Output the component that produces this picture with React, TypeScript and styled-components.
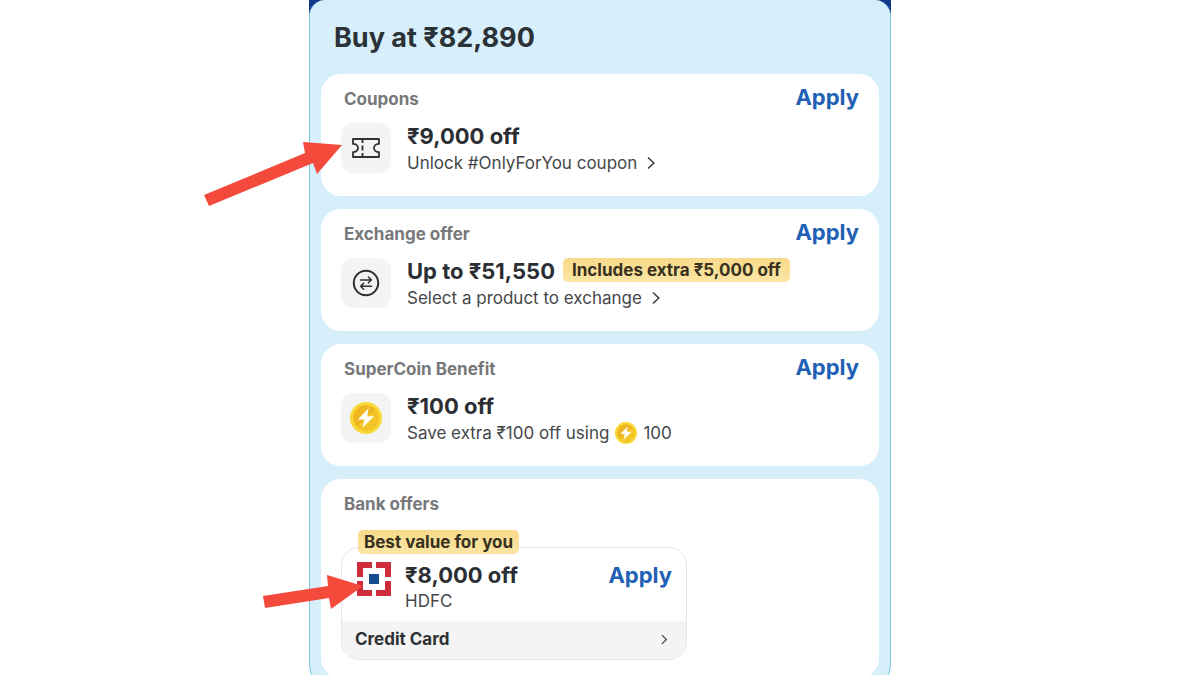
import React from "react";
import styled, { createGlobalStyle } from "styled-components";

const GlobalStyle = createGlobalStyle`
  *, *::before, *::after { box-sizing: border-box; }
  body {
    margin: 0;
    background: #fff;
    color: #2b2e33;
    font-family: Inter, "Noto Sans", "Liberation Sans", sans-serif;
  }
  h1, h2, h3, p { margin: 0; }
`;

const Page = styled.main`
  height: 100vh;
  overflow: hidden;
`;

const Backdrop = styled.div`
  width: 100%;
  max-width: 582px;
  margin: 0 auto;
  background: linear-gradient(#12398a 14px, transparent 14px);
`;

const Sheet = styled.div`
  display: flex;
  flex-direction: column;
  gap: 13px;
  padding: 20px 11px 6px;
  border: 1px solid #7fc6dc;
  border-top: 0;
  border-radius: 16px 16px 20px 20px;
  background: #d7eefb;
`;

const Price = styled.h1`
  padding: 0 13px 5px;
  font-size: 27px;
  line-height: 36px;
  font-weight: 650;
  color: #2a3238;
`;

const Card = styled.section`
  padding: 10px 20px 20px;
  border-radius: 20px;
  background: #fff;
`;

const BankCard = styled(Card)`
  padding-bottom: 18px;
`;

const CardHeader = styled.header`
  display: flex;
  align-items: flex-start;
  justify-content: space-between;
  padding-left: 3px;
`;

const Label = styled.h2`
  padding-top: 2px;
  font-size: 17px;
  line-height: 26px;
  font-weight: 700;
  color: #77787a;
`;

const ApplyButton = styled.button`
  padding: 0;
  border: 0;
  background: none;
  color: #2161b5;
  font: inherit;
  font-size: 22px;
  line-height: 26px;
  font-weight: 700;
  cursor: pointer;
`;

const Offer = styled.div`
  display: flex;
  gap: 16px;
  margin-top: 11px;
`;

const Tile = styled.div`
  position: relative;
  display: flex;
  flex: none;
  align-items: center;
  justify-content: center;
  width: 50px;
  height: 50px;
  border-radius: 12px;
  background: #f4f4f4;
`;

const OfferText = styled.div`
  flex: 1;
`;

const TitleRow = styled.div`
  display: flex;
  align-items: flex-start;
  gap: 8px;
  margin-bottom: 1px;
`;

const Title = styled.h3`
  font-size: 22px;
  line-height: 26px;
  font-weight: 650;
`;

const Detail = styled.p`
  display: flex;
  align-items: center;
  gap: 6px;
  font-size: 17px;
  line-height: 26px;
  color: #45474a;
`;

const DetailLink = styled.a`
  display: inline-flex;
  align-items: center;
  gap: 10px;
  font-size: 17px;
  line-height: 26px;
  color: #45474a;
  text-decoration: none;
`;

const Badge = styled.span`
  padding: 0 9px;
  border-radius: 5px;
  background: linear-gradient(#f8d98a, #fbe6a4);
  color: #38311f;
  font-size: 17px;
  line-height: 24px;
  font-weight: 700;
  white-space: nowrap;
`;

const BankBox = styled.div`
  position: relative;
  max-width: 346px;
  margin-top: 30px;
  border: 1px solid #e6e6e8;
  border-radius: 18px;
`;

const BoxBadge = styled(Badge)`
  position: absolute;
  top: -18px;
  left: 16px;
  padding: 0 6px;
`;

const BankOffer = styled.div`
  display: flex;
  align-items: flex-start;
  gap: 14px;
  padding: 14px 14px 7px 15px;
`;

const BankLogo = styled.div`
  position: relative;
  flex: none;
  width: 34px;
  height: 36px;
`;

const BankFooter = styled.a`
  display: flex;
  align-items: center;
  justify-content: space-between;
  padding: 6px 19px 7px 13px;
  border-radius: 0 0 17px 17px;
  background: #f4f4f4;
  color: #2f3134;
  font-size: 17px;
  line-height: 25px;
  font-weight: 700;
  text-decoration: none;
`;

const Pointer = styled.svg<{ $left: number; $top: number }>`
  position: absolute;
  left: ${(p) => p.$left}px;
  top: ${(p) => p.$top}px;
  z-index: 1;
  pointer-events: none;
`;

const Chevron = ({ size = 14 }: { size?: number }) => (
  <svg width={size / 2 + 1} height={size} viewBox="0 0 8 14" fill="none" stroke="#3a3c3f" strokeWidth="1.5" aria-hidden="true">
    <path d="M1 1.5 6.8 7 1 12.5" />
  </svg>
);

const TicketIcon = () => (
  <svg width="28" height="20" viewBox="0 0 28 20" fill="none" stroke="#303236" strokeWidth="1.8" strokeLinejoin="round" aria-hidden="true">
    <path d="M1 1H27V5.9C24.2 5.9 22 7.6 22 10S24.2 14.1 27 14.1V19H1V14.1C3.8 14.1 6 12.4 6 10S3.8 5.9 1 5.9Z" />
    <path d="M10.5 1V5M10.5 7.6V12.4M10.5 15V19" />
  </svg>
);

const ExchangeIcon = () => (
  <svg width="28" height="28" viewBox="0 0 28 28" fill="none" stroke="#2c2e31" strokeLinecap="round" strokeLinejoin="round" aria-hidden="true">
    <circle cx="14" cy="14" r="12.2" strokeWidth="2" />
    <path strokeWidth="1.5" d="M8.5 11H19.2M16.4 8 19.4 11 16.4 13.8M19.5 17.3H8.8M11.6 14.4 8.6 17.3 11.6 20.2" />
  </svg>
);

const Coin = ({ size }: { size: number }) => (
  <svg width={size} height={size} viewBox="0 0 32 32" aria-hidden="true">
    <circle cx="16" cy="16" r="16" fill="#f8d936" />
    <circle cx="16" cy="16" r="12.8" fill="#efb622" />
    <path d="M7 25.1A12.8 12.8 0 0 0 25.1 7Z" fill="#f3c529" />
    <path d="M18.6 6.2 7.8 17.4H14.3L12.4 25.8 24.2 14.3H17.3Z" fill="#fffef6" />
  </svg>
);

const HdfcMark = () => (
  <svg width="34" height="34" viewBox="0 0 34 34" role="img" aria-label="HDFC Bank">
    <path fill="#cf2c3b" d="M0 0H15V6H6V15H0ZM19 0H34V15H28V6H19ZM0 19H6V28H15V34H0ZM28 19H34V34H19V28H28Z" />
    <path fill="#174d8f" d="M12 12H22V22H12Z" />
  </svg>
);

type CardProps = {
  label: string;
  icon: React.ReactNode;
  title: string;
  badge?: string;
  children: React.ReactNode;
};

const OfferCard = ({ label, icon, title, badge, children }: CardProps) => (
  <Card>
    <CardHeader>
      <Label>{label}</Label>
      <ApplyButton type="button" aria-label={`Apply ${label}`}>Apply</ApplyButton>
    </CardHeader>
    <Offer>
      <Tile>{icon}</Tile>
      <OfferText>
        <TitleRow>
          <Title>{title}</Title>
          {badge && <Badge>{badge}</Badge>}
        </TitleRow>
        {children}
      </OfferText>
    </Offer>
  </Card>
);

export default function App() {
  return (
    <>
      <GlobalStyle />
      <Page>
        <Backdrop>
          <Sheet>
            <Price>Buy at ₹82,890</Price>
            <OfferCard
              label="Coupons"
              title="₹9,000 off"
              icon={
                <>
                  <TicketIcon />
                  <Pointer $left={-139} $top={18} width="142" height="66" viewBox="0 0 142 66" aria-hidden="true">
                    <path fill="#f44a3c" d="M2 54 103 12 101 1 140 4 115 33 111 22 7 65Z" />
                  </Pointer>
                </>
              }
            >
              <DetailLink href="#coupon">Unlock #OnlyForYou coupon <Chevron /></DetailLink>
            </OfferCard>
            <OfferCard label="Exchange offer" title="Up to ₹51,550" badge="Includes extra ₹5,000 off" icon={<ExchangeIcon />}>
              <DetailLink href="#exchange">Select a product to exchange <Chevron /></DetailLink>
            </OfferCard>
            <OfferCard label="SuperCoin Benefit" title="₹100 off" icon={<Coin size={32} />}>
              <Detail>Save extra ₹100 off using <Coin size={22} /> 100</Detail>
            </OfferCard>
            <BankCard>
              <CardHeader>
                <Label>Bank offers</Label>
              </CardHeader>
              <BankBox>
                <BoxBadge>Best value for you</BoxBadge>
                <BankOffer>
                  <BankLogo>
                    <HdfcMark />
                    <Pointer $left={-95} $top={12} width="104" height="38" viewBox="0 0 104 38" aria-hidden="true">
                      <path fill="#f44a3c" d="M1 22 66 12 65 1 101 12 69 35 67 24 3 34Z" />
                    </Pointer>
                  </BankLogo>
                  <OfferText>
                    <Title>₹8,000 off</Title>
                    <Detail>HDFC</Detail>
                  </OfferText>
                  <ApplyButton type="button" aria-label="Apply HDFC offer">Apply</ApplyButton>
                </BankOffer>
                <BankFooter href="#credit-card">
                  Credit Card <Chevron size={11} />
                </BankFooter>
              </BankBox>
            </BankCard>
          </Sheet>
        </Backdrop>
      </Page>
    </>
  );
}
